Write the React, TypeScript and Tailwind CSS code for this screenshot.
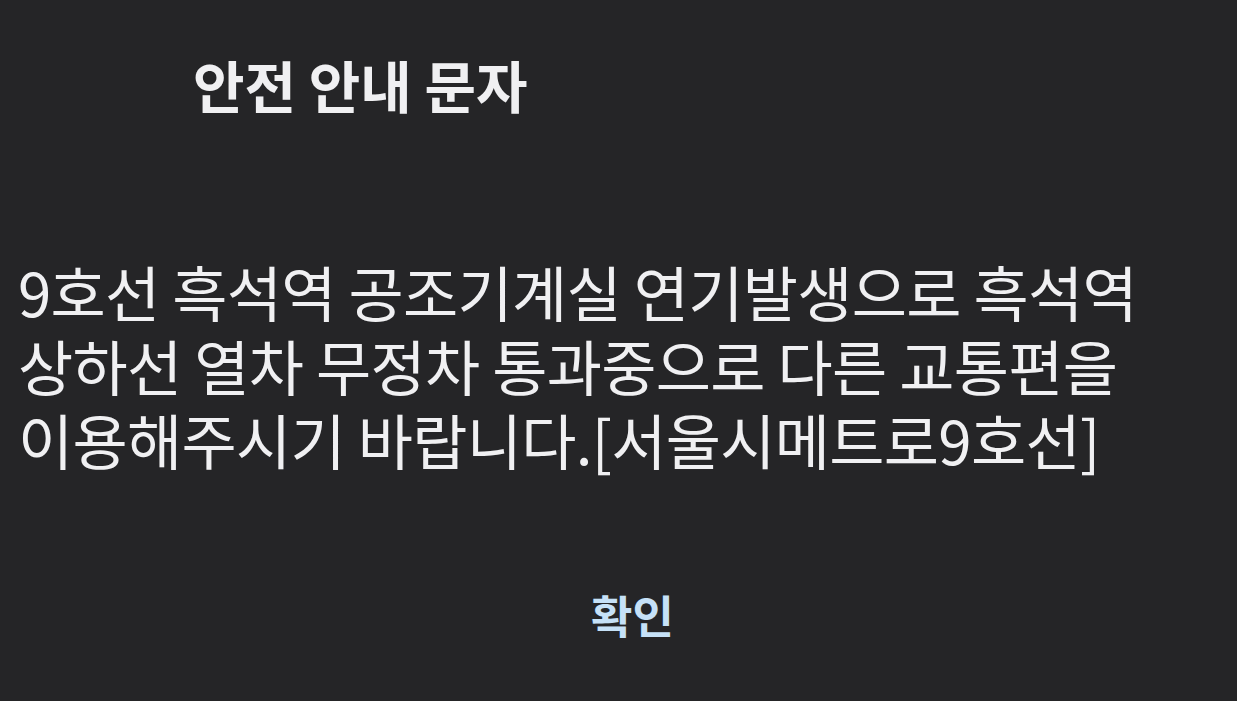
const lines = [
  "9호선 흑석역 공조기계실 연기발생으로 흑석역",
  "상하선 열차 무정차 통과중으로 다른 교통편을",
  "이용해주시기 바랍니다.[서울시메트로9호선]",
];

export default function App() {
  return (
    <div
      className="h-screen w-full bg-[#252527] flex flex-col overflow-hidden"
      style={{ fontFamily: '"Noto Sans CJK KR", "Noto Sans", sans-serif' }}
    >
      <h1 className="pl-[193px] pt-[56px] text-[56px] font-bold leading-none text-[#f0f0f2]">
        안전 안내 문자
      </h1>
      <div className="mt-[142px] pl-[18px] text-[60px] tracking-[-0.7px] text-[#f0f0f2] whitespace-nowrap">
        {lines.map((line) => (
          <div key={line} className="h-[74px] leading-[74px]">
            {line}
          </div>
        ))}
      </div>
      <div className="flex justify-center pt-[116px] pl-[28px]">
        <button className="text-[45px] font-bold leading-none text-[#c6e1f7]">확인</button>
      </div>
    </div>
  );
}
